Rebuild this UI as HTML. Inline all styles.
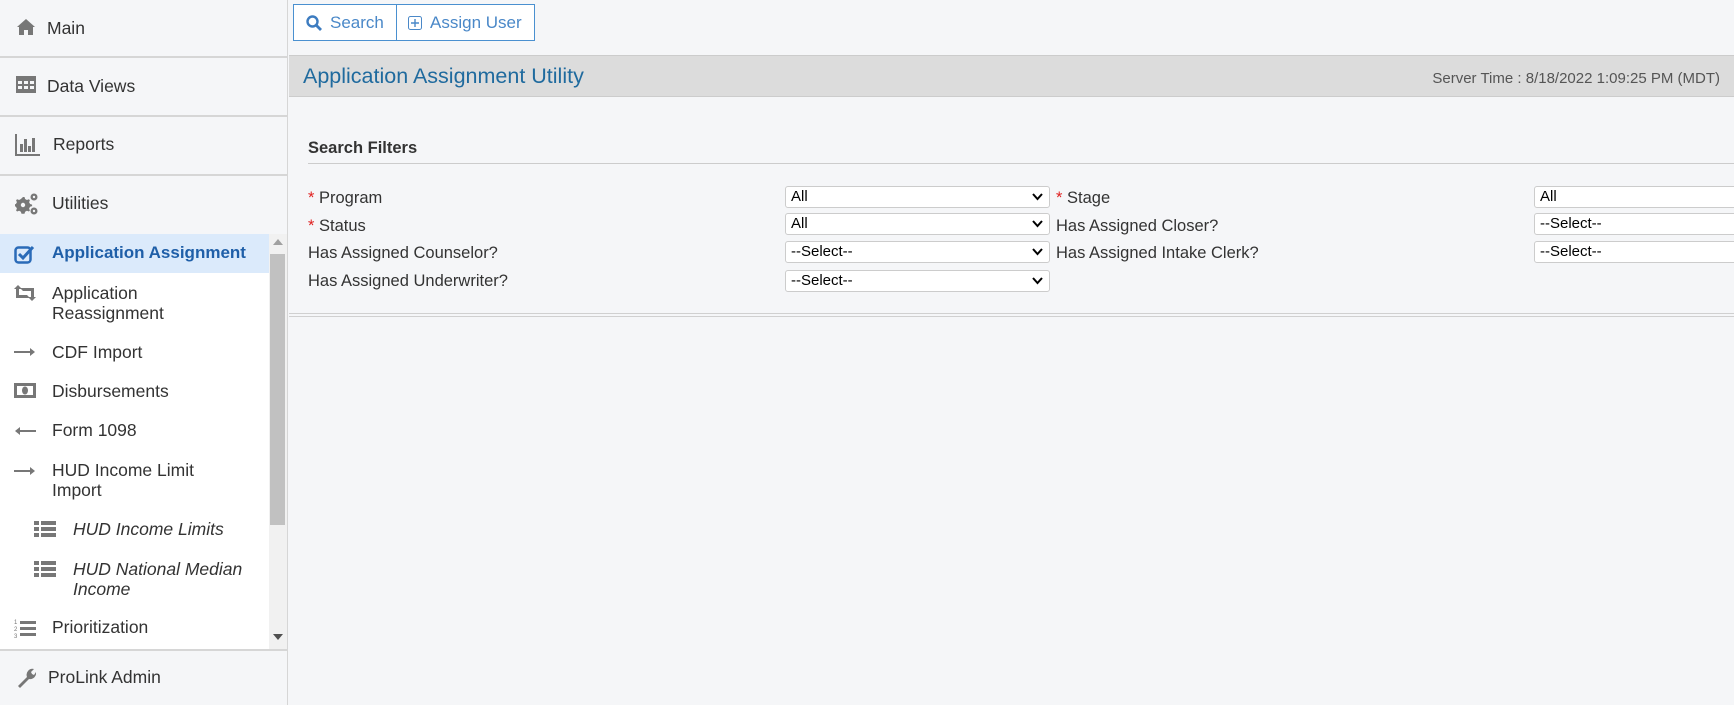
<!DOCTYPE html>
<html><head><style>
*{margin:0;padding:0;box-sizing:border-box}
body{width:1734px;height:705px;background:#f5f6f8;font-family:"Liberation Sans",sans-serif;color:#333;position:relative;overflow:hidden}
.sb{position:absolute;left:0;top:0;width:288px;height:705px;background:#f5f6f8;border-right:1px solid #d6d6d6}
.t{position:absolute;font-size:17.5px;color:#333;white-space:nowrap;line-height:20px}
.hr{position:absolute;left:0;width:288px;height:2px;background:#d6d6d6}
.ic{position:absolute;fill:#777}
.sel{position:absolute;left:0;top:234px;width:269px;height:39px;background:#dbeafb}
.white{position:absolute;left:0;top:234px;width:269px;height:416px;background:#fff}
.track{position:absolute;left:269px;top:234px;width:18px;height:416px;background:#f1f1f1}
.thumb{position:absolute;left:270px;top:254px;width:15px;height:271px;background:#c1c1c1}
.lbl{position:absolute;font-size:16.5px;color:#333;white-space:nowrap;line-height:18px}
.req{color:#e02020}
.s{position:absolute;height:22px;background:#fff;border:1px solid #ccc;border-radius:3px;font-size:15px;color:#000;padding-left:5px;line-height:20px}
.s svg{position:absolute;right:6px;top:6px}
</style></head><body>
<div class="sb">
 <svg class="ic" style="left:16px;top:18px" width="20" height="18" viewBox="0 0 20 18"><path d="M10 1 L1 9 L3 9 L3 17 L8 17 L8 12 L12 12 L12 17 L17 17 L17 9 L19 9 Z"/></svg>
 <div class="t" style="left:47px;top:18px">Main</div>
 <div class="hr" style="top:56px"></div>
 <svg class="ic" style="left:16px;top:76px" width="20" height="17" viewBox="0 0 20 17"><path d="M0 0h20v17H0z M2 5v3h4V5z M8 5v3h4V5z M14 5v3h4V5z M2 10v3h4v-3z M8 10v3h4v-3z M14 10v3h4v-3z" fill-rule="evenodd"/></svg>
 <div class="t" style="left:47px;top:76px">Data Views</div>
 <div class="hr" style="top:115px"></div>
 <svg class="ic" style="left:15px;top:134px" width="25" height="22" viewBox="0 0 25 22"><path d="M0 0h2v20h23v2H0z M5 10h3v8H5z M9 5h3v13H9z M13 12h3v6h-3z M17 4h3v14h-3z"/></svg>
 <div class="t" style="left:53px;top:134px">Reports</div>
 <div class="hr" style="top:174px"></div>
 <svg class="ic" style="left:15px;top:192px" width="24" height="24" viewBox="0 0 24 24"><path d="M8 5l1.5 0 .6 2 1.8 1 2-.8 1 1-.8 2 1 1.8 2 .6v1.5l-2 .6-1 1.8.8 2-1 1-2-.8-1.8 1-.6 2H6.5l-.6-2-1.8-1-2 .8-1-1 .8-2-1-1.8-2-.6v-1.5l2-.6 1-1.8-.8-2 1-1 2 .8 1.8-1z"/><circle cx="8" cy="13" r="2.2" fill="#f5f6f8"/><circle cx="19" cy="5" r="3.5"/><circle cx="19" cy="5" r="1.2" fill="#f5f6f8"/><circle cx="19" cy="19" r="3.5"/><circle cx="19" cy="19" r="1.2" fill="#f5f6f8"/></svg>
 <div class="t" style="left:52px;top:193px">Utilities</div>
 <div class="white"></div>
 <div class="sel"></div>
 <svg style="position:absolute;left:14px;top:244px" width="22" height="20" viewBox="0 0 22 20"><rect x="1.5" y="3.5" width="15" height="15" rx="3" fill="none" stroke="#2a6bb8" stroke-width="2.5"/><path d="M5 10l4 4 10-11" fill="none" stroke="#2a6bb8" stroke-width="3"/></svg>
 <div class="t" style="left:52px;top:243px;color:#1f5fa8;font-weight:bold;font-size:17px">Application Assignment</div>
 <svg class="ic" style="left:14px;top:285px" width="22" height="16" viewBox="0 0 22 16"><path d="M0 4l4-4 4 4H5v6h8l3 3H2V4z M22 12l-4 4-4-4h3V6H9L6 3h14v9z"/></svg>
 <div class="t" style="left:52px;top:283px">Application<br>Reassignment</div>
 <svg class="ic" style="left:14px;top:347px" width="22" height="10" viewBox="0 0 22 10"><path d="M0 4h16V1l5 4-5 4V6H0z"/></svg>
 <div class="t" style="left:52px;top:342px">CDF Import</div>
 <svg class="ic" style="left:14px;top:383px" width="22" height="15" viewBox="0 0 22 15"><path d="M0 0h22v15H0z M3 3v9h16V3z" fill-rule="evenodd"/><ellipse cx="11" cy="7.5" rx="3" ry="4"/></svg>
 <div class="t" style="left:52px;top:381px">Disbursements</div>
 <svg class="ic" style="left:14px;top:426px" width="22" height="10" viewBox="0 0 22 10"><path d="M22 4H6V1L1 5l5 4V6h16z"/></svg>
 <div class="t" style="left:52px;top:420px">Form 1098</div>
 <svg class="ic" style="left:14px;top:466px" width="22" height="10" viewBox="0 0 22 10"><path d="M0 4h16V1l5 4-5 4V6H0z"/></svg>
 <div class="t" style="left:52px;top:460px">HUD Income Limit<br>Import</div>
 <svg class="ic" style="left:34px;top:521px" width="22" height="16" viewBox="0 0 22 16"><path d="M0 0h5v4H0z M7 0h15v4H7z M0 6h5v4H0z M7 6h15v4H7z M0 12h5v4H0z M7 12h15v4H7z"/></svg>
 <div class="t" style="left:73px;top:519px;font-style:italic">HUD Income Limits</div>
 <svg class="ic" style="left:34px;top:561px" width="22" height="16" viewBox="0 0 22 16"><path d="M0 0h5v4H0z M7 0h15v4H7z M0 6h5v4H0z M7 6h15v4H7z M0 12h5v4H0z M7 12h15v4H7z"/></svg>
 <div class="t" style="left:73px;top:559px;font-style:italic">HUD National Median<br>Income</div>
 <svg class="ic" style="left:14px;top:618px" width="22" height="20" viewBox="0 0 22 20"><path d="M6 3h16v3H6z M6 9h16v3H6z M6 15h16v3H6z"/><text x="0" y="6" font-size="6" fill="#777">1</text><text x="0" y="13" font-size="6" fill="#777">2</text><text x="0" y="20" font-size="6" fill="#777">3</text></svg>
 <div class="t" style="left:52px;top:617px">Prioritization</div>
 <div class="track"></div><div class="thumb"></div>
 <svg style="position:absolute;left:273px;top:239px" width="10" height="6"><path d="M0 6L5 0 10 6z" fill="#a0a0a0"/></svg>
 <svg style="position:absolute;left:273px;top:634px" width="10" height="6"><path d="M0 0L5 6 10 0z" fill="#505050"/></svg>
 <div class="hr" style="top:649px"></div>
 <svg class="ic" style="left:16px;top:667px" width="20" height="22" viewBox="0 0 20 22"><path d="M2 19 L11 10 A6 6 0 0 1 18 2 L15 5 L16 7 L18 8 L20 5 A6 6 0 0 1 13 12 L4 21 Z"/></svg>
 <div class="t" style="left:48px;top:667px">ProLink Admin</div>
</div>

<div style="position:absolute;left:293px;top:4px;width:242px;height:37px;border:1px solid #4a90d0;background:#fff"></div>
<div style="position:absolute;left:396px;top:5px;width:1px;height:35px;background:#4a90d0"></div>
<svg style="position:absolute;left:306px;top:15px" width="16" height="16" viewBox="0 0 16 16"><circle cx="6.5" cy="6.5" r="5" fill="none" stroke="#3d7cc0" stroke-width="2.4"/><path d="M10 10l5 5" stroke="#3d7cc0" stroke-width="2.8"/></svg>
<div class="t" style="left:330px;top:13px;color:#4a88c8;font-size:17px">Search</div>
<svg style="position:absolute;left:408px;top:16px" width="14" height="14" viewBox="0 0 14 14"><rect x="0.5" y="0.5" width="13" height="13" rx="2" fill="none" stroke="#4a88c8"/><path d="M7 3v8M3 7h8" stroke="#4a88c8" stroke-width="1.4"/></svg>
<div class="t" style="left:430px;top:13px;color:#4a88c8;font-size:17px">Assign User</div>

<div style="position:absolute;left:289px;top:55px;width:1445px;height:42px;background:#dcdcdc;border-top:1px solid #ccc;border-bottom:1px solid #ccc"></div>
<div class="t" style="left:303px;top:64px;color:#1f6a9e;font-size:21.5px;line-height:24px">Application Assignment Utility</div>
<div class="t" style="right:14px;top:69px;color:#555;font-size:15px">Server Time : 8/18/2022 1:09:25 PM (MDT)</div>

<div class="t" style="left:308px;top:138px;font-weight:bold;font-size:16.5px">Search Filters</div>
<div style="position:absolute;left:308px;top:163px;width:1426px;height:1px;background:#ccc"></div>

<div class="lbl" style="left:308px;top:189px"><span class="req">*</span> Program</div>
<div class="lbl" style="left:308px;top:217px"><span class="req">*</span> Status</div>
<div class="lbl" style="left:308px;top:244px">Has Assigned Counselor?</div>
<div class="lbl" style="left:308px;top:272px">Has Assigned Underwriter?</div>

<div class="s" style="left:785px;top:186px;width:265px">All<svg width="11" height="8"><path d="M1 1l4.5 5 4.5-5" fill="none" stroke="#000" stroke-width="2"/></svg></div>
<div class="s" style="left:785px;top:213px;width:265px">All<svg width="11" height="8"><path d="M1 1l4.5 5 4.5-5" fill="none" stroke="#000" stroke-width="2"/></svg></div>
<div class="s" style="left:785px;top:241px;width:265px">--Select--<svg width="11" height="8"><path d="M1 1l4.5 5 4.5-5" fill="none" stroke="#000" stroke-width="2"/></svg></div>
<div class="s" style="left:785px;top:270px;width:265px">--Select--<svg width="11" height="8"><path d="M1 1l4.5 5 4.5-5" fill="none" stroke="#000" stroke-width="2"/></svg></div>

<div class="lbl" style="left:1056px;top:189px"><span class="req">*</span> Stage</div>
<div class="lbl" style="left:1056px;top:217px">Has Assigned Closer?</div>
<div class="lbl" style="left:1056px;top:244px">Has Assigned Intake Clerk?</div>

<div class="s" style="left:1534px;top:186px;width:210px">All</div>
<div class="s" style="left:1534px;top:213px;width:210px">--Select--</div>
<div class="s" style="left:1534px;top:241px;width:210px">--Select--</div>

<div style="position:absolute;left:289px;top:313px;width:1445px;height:4px;border-top:1px solid #d0d0d0;border-bottom:1px solid #d0d0d0"></div>
</body></html>
